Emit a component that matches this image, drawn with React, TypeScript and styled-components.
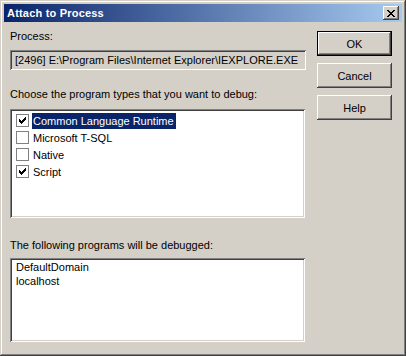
import styled, { createGlobalStyle } from "styled-components";

const GlobalStyle = createGlobalStyle`
  body {
    margin: 0;
    background: #d4d0c8;
  }
`;

const programTypes = [
  { name: "Common Language Runtime", checked: true, selected: true },
  { name: "Microsoft T-SQL", checked: false, selected: false },
  { name: "Native", checked: false, selected: false },
  { name: "Script", checked: true, selected: false },
];

const programs = ["DefaultDomain", "localhost"];

// classic 7x7 pixel check glyph
const CheckMark = () => (
  <svg width="7" height="7" viewBox="0 0 7 7" shapeRendering="crispEdges">
    <rect x="0" y="2" width="1" height="3" fill="#000" />
    <rect x="1" y="3" width="1" height="3" fill="#000" />
    <rect x="2" y="4" width="1" height="3" fill="#000" />
    <rect x="3" y="3" width="1" height="3" fill="#000" />
    <rect x="4" y="2" width="1" height="3" fill="#000" />
    <rect x="5" y="1" width="1" height="3" fill="#000" />
    <rect x="6" y="0" width="1" height="3" fill="#000" />
  </svg>
);

const CloseGlyph = () => (
  <svg width="8" height="7" viewBox="0 0 8 7" shapeRendering="crispEdges">
    <path d="M0 0h2l6 7h-2z M6 0h2l-6 7h-2z" fill="#000" />
  </svg>
);

const App = () => {
  return (
    <>
      <GlobalStyle />
      <Window>
        <TitleBar>
          <Title>Attach to Process</Title>
          <CloseButton>
            <CloseGlyph />
          </CloseButton>
        </TitleBar>
        <Body>
          <MainColumn>
            <Label>Process:</Label>
            <ProcessField>[2496] E:\Program Files\Internet Explorer\IEXPLORE.EXE</ProcessField>
            <Label $gap={18}>Choose the program types that you want to debug:</Label>
            <ListBox $height={109} $gap={8}>
              <TypeList>
                {programTypes.map((t) => (
                  <TypeRow key={t.name}>
                    <CheckBox>{t.checked && <CheckMark />}</CheckBox>
                    <TypeName $selected={t.selected}>{t.name}</TypeName>
                  </TypeRow>
                ))}
              </TypeList>
            </ListBox>
            <Label $gap={21}>The following programs will be debugged:</Label>
            <ListBox $height={84} $gap={6}>
              {programs.map((p) => (
                <ProgramRow key={p}>{p}</ProgramRow>
              ))}
            </ListBox>
          </MainColumn>
          <ButtonColumn>
            <Button $default>OK</Button>
            <Button>Cancel</Button>
            <Button>Help</Button>
          </ButtonColumn>
        </Body>
      </Window>
    </>
  );
};

const raised =
  "inset -1px -1px #404040, inset 1px 1px #ffffff, inset -2px -2px #808080, inset 2px 2px #d4d0c8";
const sunken =
  "inset 1px 1px #808080, inset -1px -1px #ffffff, inset 2px 2px #404040, inset -2px -2px #d4d0c8";

const Window = styled.div`
  width: 406px;
  height: 356px;
  box-sizing: border-box;
  padding: 4px;
  background: #d4d0c8;
  box-shadow: inset -1px -1px #404040, inset 1px 1px #d4d0c8,
    inset -2px -2px #808080, inset 2px 2px #ffffff;
  font-family: "Liberation Sans", Arial, sans-serif;
  font-size: 11px;
  color: #000;
  display: flex;
  flex-direction: column;
`;

const TitleBar = styled.div`
  height: 18px;
  display: flex;
  align-items: center;
  justify-content: space-between;
  padding: 0 3px;
  background: linear-gradient(to right, #0a246a, #a6caf0);
`;

const Title = styled.span`
  color: #fff;
  font-weight: bold;
  font-size: 11px;
  letter-spacing: 0.2px;
`;

const CloseButton = styled.div`
  width: 16px;
  height: 14px;
  display: flex;
  align-items: center;
  justify-content: center;
  background: #d4d0c8;
  box-shadow: ${raised};
`;

const Body = styled.div`
  display: flex;
  gap: 11px;
  padding: 8px 6px 0;
`;

const MainColumn = styled.div`
  width: 296px;
  display: flex;
  flex-direction: column;
`;

const Label = styled.div<{ $gap?: number }>`
  line-height: 13px;
  margin-top: ${(p) => p.$gap ?? 0}px;
`;

const ProcessField = styled.div`
  margin-top: 7px;
  height: 20px;
  padding: 0 5px;
  line-height: 20px;
  white-space: nowrap;
  overflow: hidden;
  background: #d4d0c8;
  box-shadow: ${sunken};
`;

const ListBox = styled.div<{ $height: number; $gap: number }>`
  margin-top: ${(p) => p.$gap}px;
  height: ${(p) => p.$height}px;
  width: 295px;
  box-sizing: border-box;
  padding: 2px 4px;
  background: #fff;
  box-shadow: ${sunken};
`;

const TypeList = styled.div`
  display: flex;
  flex-direction: column;
  padding-top: 1px;
  margin-left: 2px;
`;

const TypeRow = styled.div`
  height: 17px;
  display: flex;
  align-items: center;
  gap: 3px;
`;

const CheckBox = styled.div`
  width: 13px;
  height: 13px;
  box-sizing: border-box;
  border: 1px solid #808080;
  background: #fff;
  display: flex;
  align-items: center;
  justify-content: center;
`;

const TypeName = styled.span<{ $selected: boolean }>`
  height: 16px;
  line-height: 16px;
  padding: 0 2px 0 1px;
  background: ${(p) => (p.$selected ? "#0a246a" : "transparent")};
  color: ${(p) => (p.$selected ? "#fff" : "#000")};
`;

const ProgramRow = styled.div`
  line-height: 14px;
  padding-left: 2px;
`;

const ButtonColumn = styled.div`
  display: flex;
  flex-direction: column;
  gap: 7px;
  padding-top: 1px;
`;

const Button = styled.div<{ $default?: boolean }>`
  width: 75px;
  height: 25px;
  box-sizing: border-box;
  display: flex;
  align-items: center;
  justify-content: center;
  background: #d4d0c8;
  border: ${(p) => (p.$default ? "1px solid #000" : "none")};
  box-shadow: ${(p) =>
    p.$default
      ? "inset -1px -1px #404040, inset 1px 1px #ffffff, inset -2px -2px #808080"
      : raised};
`;

export default App;
